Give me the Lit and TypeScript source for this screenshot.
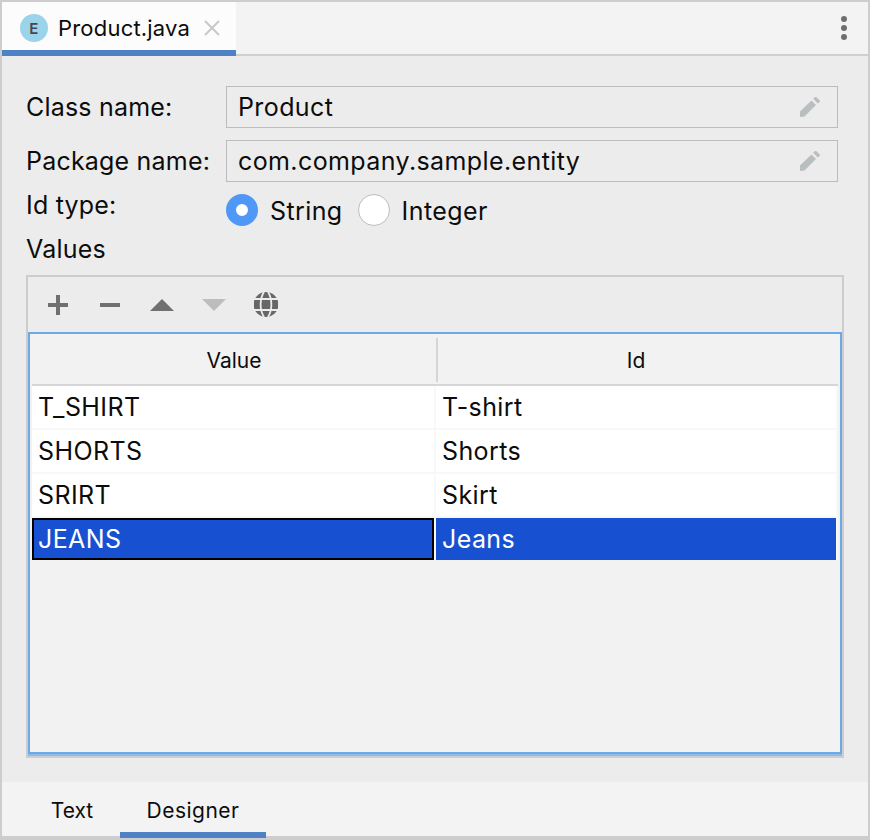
import { LitElement, css, html, svg } from 'lit';
import { customElement } from 'lit/decorators.js';

const rows = [
  ['T_SHIRT', 'T-shirt'],
  ['SHORTS', 'Shorts'],
  ['SRIRT', 'Skirt'],
  ['JEANS', 'Jeans'],
];

const pencil = html`<svg class="pencil" viewBox="0 0 20 20" width="20" height="20">
  <path fill="#b9bfc1" d="M0 14.5 L11.5 3.5 L16 8 L4.5 19.5 L0 20 Z"></path>
  <path fill="#b9bfc1" d="M13.2 1.8 L15 0 Q15.6 -.4 16.2 0 L19.8 3.6 Q20.2 4.2 19.8 4.8 L17.8 6.6 Z"></path>
</svg>`;

const globe = svg`
  <circle cx="12" cy="12.5" r="12.5" fill="#676767"></circle>
  <path d="M0 7 H24 M0 18 H24" stroke="#ececec" stroke-width="1.8" fill="none"></path>
  <path d="M10 0 C5.5 7 5.5 18 10 25 M14 0 C18.5 7 18.5 18 14 25" stroke="#ececec" stroke-width="1.8" fill="none"></path>`;

@customElement('app-root')
export class AppRoot extends LitElement {
  static styles = css`
    :host {
      display: flex;
      flex-direction: column;
      width: 870px;
      height: 840px;
      box-sizing: border-box;
      border: 2px solid #cdcdcd;
      border-bottom-width: 4px;
      background: #ececec;
      font-family: Inter, 'Liberation Sans', sans-serif;
      font-size: 25px;
      letter-spacing: 0.4px;
      color: #0c0c0c;
    }
    .tabs {
      display: flex;
      justify-content: space-between;
      height: 54px;
      box-sizing: border-box;
      background: #f3f3f3;
      border-bottom: 2px solid #cfcfcf;
    }
    .tab {
      display: flex;
      align-items: center;
      gap: 10px;
      width: 234px;
      height: 54px;
      box-sizing: border-box;
      padding: 4px 0 0 18px;
      background: #fcfcfc;
      border-bottom: 6px solid #4f82c4;
      font-size: 22px;
      letter-spacing: 0.2px;
    }
    .badge {
      display: flex;
      align-items: center;
      justify-content: center;
      width: 28px;
      height: 28px;
      border-radius: 50%;
      background: #9bd3ea;
      color: #44494d;
      font-size: 15px;
      font-weight: 600;
    }
    .close {
      margin-left: 4px;
    }
    .more {
      display: flex;
      flex-direction: column;
      gap: 3px;
      padding: 14px 21px 0 0;
    }
    .more i {
      width: 6px;
      height: 6px;
      border-radius: 50%;
      background: #6e6e6e;
    }
    .main {
      flex: 1;
      display: flex;
      flex-direction: column;
      padding: 30px 24px 24px;
    }
    .field-row {
      display: flex;
      align-items: center;
      margin: 0 6px 12px 0;
    }
    .label {
      width: 200px;
      letter-spacing: 0.2px;
    }
    .field {
      flex: 1;
      display: flex;
      align-items: center;
      justify-content: space-between;
      height: 42px;
      box-sizing: border-box;
      padding: 0 17px 0 11px;
      border: 1.5px solid #bcbcbc;
    }
    .radio-row {
      display: flex;
      align-items: flex-start;
      height: 40px;
    }
    .radio-row .label {
      line-height: 22px;
    }
    .radio {
      display: flex;
      align-items: center;
      gap: 12px;
      margin-right: 15px;
    }
    .radio span + span {
      padding-top: 2px;
    }
    .dot {
      width: 32px;
      height: 32px;
      box-sizing: border-box;
      border-radius: 50%;
      background: #fff;
      border: 1.5px solid #bdbdbd;
    }
    .dot.on {
      border: 10px solid #5098f5;
    }
    .values {
      height: 41px;
      line-height: 30px;
      letter-spacing: 0.2px;
    }
    .panel {
      flex: 1;
      display: flex;
      flex-direction: column;
      border: 2px solid #cdcdcd;
    }
    .toolbar {
      display: flex;
      align-items: center;
      height: 55px;
      padding-left: 4px;
    }
    .tool {
      display: flex;
      justify-content: center;
      width: 52px;
    }
    .table {
      flex: 1;
      display: flex;
      flex-direction: column;
      margin-bottom: 2px;
      padding: 0 2px;
      border: 2px solid #6aaae8;
      box-shadow: 0 2px 0 #8dbcea;
      background: #f2f2f2;
    }
    .head {
      display: grid;
      grid-template-columns: 404px 1fr;
      height: 52px;
      box-sizing: border-box;
      border-bottom: 2px solid #d6d6d6;
      font-size: 21px;
      letter-spacing: 0;
    }
    .head div {
      display: flex;
      align-items: center;
      justify-content: center;
      margin: 4px 0 2px;
    }
    .head div + div {
      border-left: 2px solid #d6d6d6;
      padding-right: 4px;
    }
    .row {
      display: grid;
      grid-template-columns: 402px 400px;
      gap: 2px;
      height: 44px;
      padding-right: 2px;
      background: #f8f8f8;
    }
    .row.sel {
      height: 42px;
    }
    .cell {
      display: flex;
      align-items: center;
      box-sizing: border-box;
      padding-left: 6px;
      height: 42px;
      background: #fff;
    }
    .row.sel .cell {
      background: #1850d2;
      color: #fff;
    }
    .row.sel .cell:first-child {
      outline: 2px solid #000;
      outline-offset: -2px;
    }
    .bottom {
      display: flex;
      height: 54px;
      padding-left: 22px;
      background: #f3f3f3;
      font-size: 21px;
      letter-spacing: 0;
    }
    .btab {
      display: flex;
      align-items: center;
      justify-content: center;
      box-sizing: border-box;
    }
    .btab.first {
      width: 96px;
      height: 54px;
      padding-top: 2px;
    }
    .btab.active {
      width: 146px;
      height: 56px;
      padding-top: 6px;
      border-bottom: 6px solid #4f82c4;
      letter-spacing: 0.5px;
    }
  `;

  render() {
    return html`
      <div class="tabs">
        <div class="tab">
          <span class="badge">E</span>
          <span>Product.java</span>
          <svg class="close" viewBox="0 0 16 16" width="16" height="16">
            <path d="M1 1 L15 15 M15 1 L1 15" stroke="#c6c8ca" stroke-width="2" fill="none"></path>
          </svg>
        </div>
        <div class="more"><i></i><i></i><i></i></div>
      </div>
      <div class="main">
        <div class="field-row">
          <span class="label">Class name:</span>
          <div class="field"><span>Product</span>${pencil}</div>
        </div>
        <div class="field-row">
          <span class="label">Package name:</span>
          <div class="field"><span>com.company.sample.entity</span>${pencil}</div>
        </div>
        <div class="radio-row">
          <span class="label">Id type:</span>
          <label class="radio"><span class="dot on"></span><span>String</span></label>
          <label class="radio"><span class="dot"></span><span>Integer</span></label>
        </div>
        <div class="values">Values</div>
        <div class="panel">
          <div class="toolbar">
            <span class="tool">
              <svg viewBox="0 0 20 20" width="20" height="20"><path d="M10 0 V20 M0 10 H20" stroke="#707070" stroke-width="4"></path></svg>
            </span>
            <span class="tool">
              <svg viewBox="0 0 20 20" width="20" height="20"><path d="M0 10 H20" stroke="#707070" stroke-width="4"></path></svg>
            </span>
            <span class="tool">
              <svg viewBox="0 0 24 12" width="24" height="12"><path d="M12 0 L24 12 H0 Z" fill="#707070"></path></svg>
            </span>
            <span class="tool">
              <svg viewBox="0 0 24 12" width="24" height="12"><path d="M0 0 H24 L12 12 Z" fill="#bdbdbd"></path></svg>
            </span>
            <span class="tool">
              <svg viewBox="0 0 24 25" width="24" height="25">${globe}</svg>
            </span>
          </div>
          <div class="table">
            <div class="head"><div>Value</div><div>Id</div></div>
            ${rows.map(
              (r, i) => html`
                <div class="row ${i === 3 ? 'sel' : ''}">
                  <div class="cell">${r[0]}</div>
                  <div class="cell">${r[1]}</div>
                </div>
              `
            )}
          </div>
        </div>
      </div>
      <div class="bottom">
        <div class="btab first">Text</div>
        <div class="btab active">Designer</div>
      </div>
    `;
  }
}
